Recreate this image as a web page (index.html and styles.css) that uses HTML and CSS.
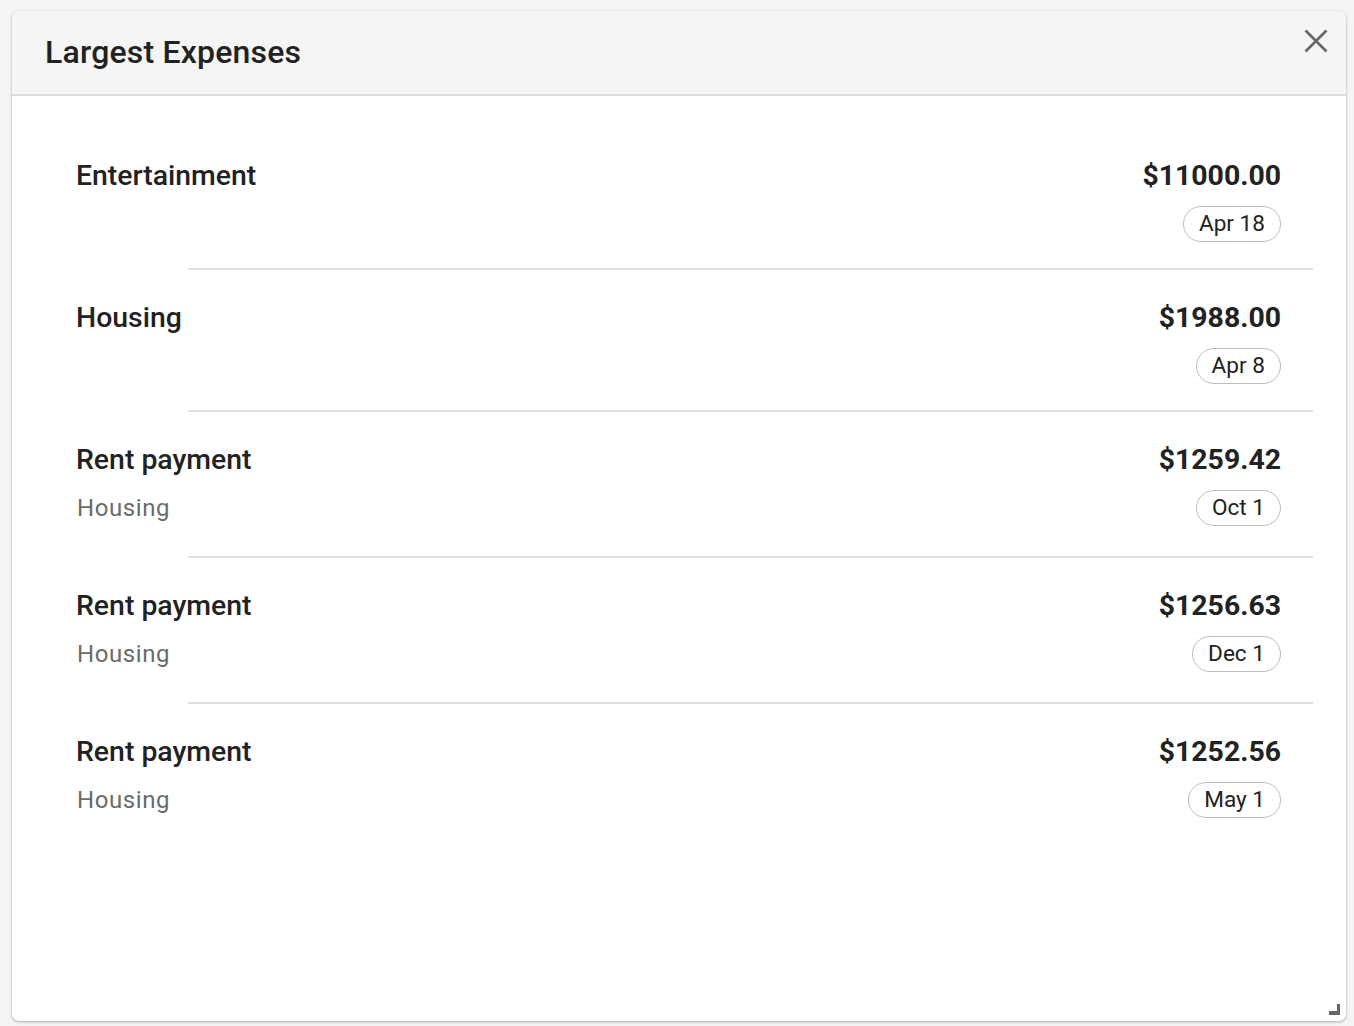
FILE: index.html
```html
<!DOCTYPE html>
<html>
<head>
<meta charset="utf-8">
<link rel="stylesheet" href="styles.css">
</head>
<body>
<div class="card">
  <div class="header">
    <h1 class="title">Largest Expenses</h1>
    <button class="close" aria-label="Close">
      <svg width="24" height="24" viewBox="0 0 24 24"><path d="M1.5 1.5 L22.5 22.5 M22.5 1.5 L1.5 22.5" stroke="#666" stroke-width="2.6" fill="none"/></svg>
    </button>
  </div>
  <ul class="list">
    <li class="item">
      <div class="left"><div class="name">Entertainment</div></div>
      <div class="right"><div class="amount">$11000.00</div><span class="chip">Apr 18</span></div>
    </li>
    <li class="divider"></li>
    <li class="item">
      <div class="left"><div class="name">Housing</div></div>
      <div class="right"><div class="amount">$1988.00</div><span class="chip">Apr 8</span></div>
    </li>
    <li class="divider"></li>
    <li class="item">
      <div class="left"><div class="name">Rent payment</div><div class="sub">Housing</div></div>
      <div class="right"><div class="amount">$1259.42</div><span class="chip">Oct 1</span></div>
    </li>
    <li class="divider"></li>
    <li class="item">
      <div class="left"><div class="name">Rent payment</div><div class="sub">Housing</div></div>
      <div class="right"><div class="amount">$1256.63</div><span class="chip">Dec 1</span></div>
    </li>
    <li class="divider"></li>
    <li class="item">
      <div class="left"><div class="name">Rent payment</div><div class="sub">Housing</div></div>
      <div class="right"><div class="amount">$1252.56</div><span class="chip">May 1</span></div>
    </li>
  </ul>
  <span class="resize"></span>
</div>
</body>
</html>
```
FILE: styles.css
```css
html, body { margin: 0; padding: 0; }
body {
  background: #f4f4f4;
  font-family: Roboto, "Liberation Sans", Arial, sans-serif;
  color: #222;
  padding: 11px 8px 5px 12px;
}
.card {
  position: relative;
  width: 1334px;
  height: 1010px;
  background: #fff;
  border-radius: 7px;
  box-shadow: 0 1px 3px rgba(0,0,0,0.28), 0 0 1px rgba(0,0,0,0.15);
  overflow: hidden;
  box-sizing: border-box;
}
.header {
  height: 83px;
  background: #f5f5f5;
  border-bottom: 2px solid #dcdcdc;
  display: flex;
  align-items: center;
  justify-content: space-between;
  padding: 0 18px 0 33px;
}
.title {
  margin: 0;
  font-size: 32px;
  font-weight: 500;
  color: #222;
  letter-spacing: 0.2px;
  line-height: 36px;
  margin-top: -1px;
}
.close {
  border: 0;
  background: none;
  padding: 0;
  width: 24px;
  height: 24px;
  align-self: flex-start;
  margin-top: 18px;
  cursor: pointer;
}
.close svg { display: block; }
.list {
  list-style: none;
  margin: 0;
  padding: 32px 0 0 0;
}
.item {
  display: flex;
  justify-content: space-between;
  align-items: flex-start;
  padding: 32px 65px 26px 65px;
}
.left { display: flex; flex-direction: column; }
.name {
  font-size: 28.4px;
  font-weight: 500;
  line-height: 32px;
  color: #222;
  margin-left: -1px;
}
.sub {
  font-size: 24px;
  line-height: 44px;
  margin-top: 10px;
  color: #6b6b6b;
  letter-spacing: 0.6px;
}
.right {
  display: flex;
  flex-direction: column;
  align-items: flex-end;
}
.amount {
  font-size: 28.4px;
  font-weight: 700;
  line-height: 32px;
  color: #222;
}
.chip {
  margin-top: 14px;
  height: 36px;
  box-sizing: border-box;
  border: 1.5px solid #bdbdbd;
  border-radius: 18px;
  padding: 0 15px;
  font-size: 22.6px;
  line-height: 33px;
  color: #222;
}
.divider {
  height: 2px;
  background: #e0e0e0;
  margin: 0 33px 0 176px;
}
.resize {
  position: absolute;
  right: 6px;
  bottom: 6px;
  width: 11px;
  height: 11px;
  border-right: 3px solid #666;
  border-bottom: 4px solid #666;
  box-sizing: border-box;
}
```
